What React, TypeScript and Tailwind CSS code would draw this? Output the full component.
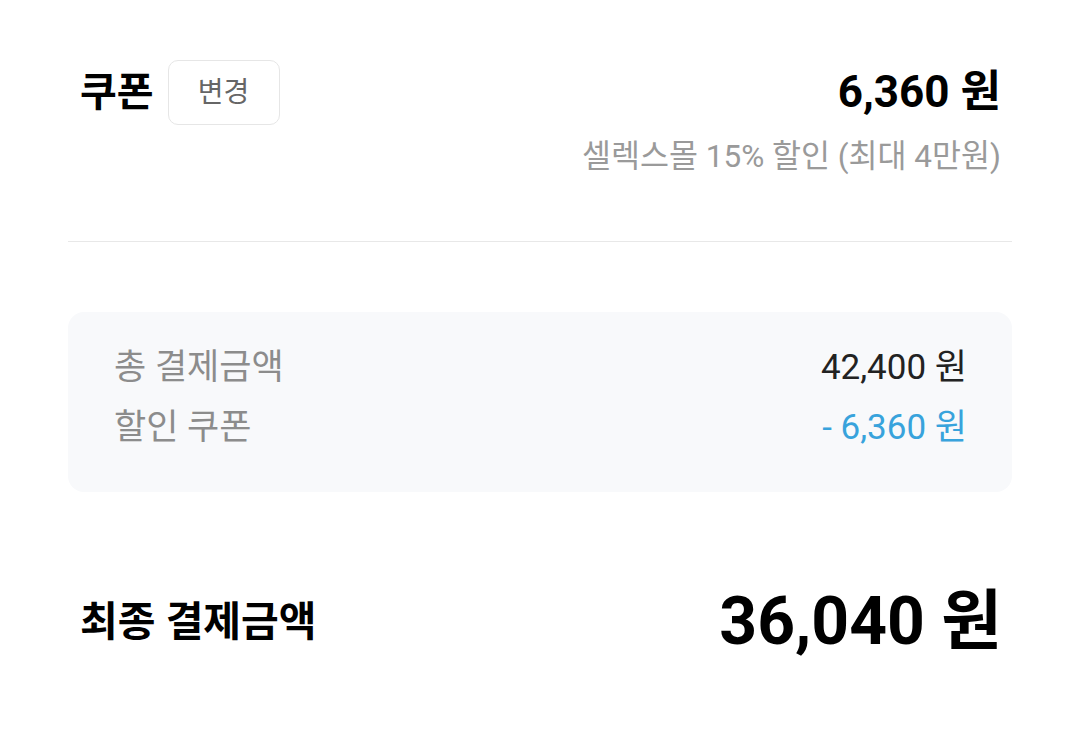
import React from "react";

const font = { fontFamily: "Roboto, 'Noto Sans CJK KR', sans-serif" };

export default function App() {
  return (
    <div className="w-[1080px] h-[734px] bg-white px-[68px]" style={font}>
      {/* Coupon section */}
      <div className="pt-[60px] pb-[64px] border-b border-[#e8e8e8]">
        <div className="flex items-start justify-between pl-[12px] pr-[11px]">
          <div className="flex items-center gap-[14px] h-[65px]">
            <span className="text-[40px] font-bold text-black leading-none">쿠폰</span>
            <button className="w-[112px] h-[65px] rounded-[10px] border border-[#e6e6e6] text-[28px] text-[#666] bg-white">
              변경
            </button>
          </div>
          <div className="flex flex-col items-end">
            <span className="text-[44px] font-bold text-black leading-[65px]">6,360 원</span>
            <span className="text-[31.5px] text-[#9a9a9a] mt-[12px] leading-[40px]">셀렉스몰 15% 할인 (최대 4만원)</span>
          </div>
        </div>
      </div>

      {/* Summary box */}
      <div className="mt-[70px] h-[180px] rounded-[16px] bg-[#f8f9fb] pl-[46px] pr-[45px] pt-[36px] flex flex-col gap-[20px]">
        <div className="flex justify-between items-center leading-[40px]">
          <span className="text-[35px] text-[#8c8c8c]">총 결제금액</span>
          <span className="text-[35px] text-[#222]">42,400 원</span>
        </div>
        <div className="flex justify-between items-center leading-[40px]">
          <span className="text-[35px] text-[#8c8c8c]">할인 쿠폰</span>
          <span className="text-[35px] text-[#38a3dc]">- 6,360 원</span>
        </div>
      </div>

      {/* Final amount */}
      <div className="mt-[90px] h-[80px] flex justify-between items-center pl-[12px] pr-[10px]">
        <span className="text-[41px] font-bold text-black leading-none">최종 결제금액</span>
        <span className="text-[66px] font-bold text-black leading-none">36,040 원</span>
      </div>
    </div>
  );
}
